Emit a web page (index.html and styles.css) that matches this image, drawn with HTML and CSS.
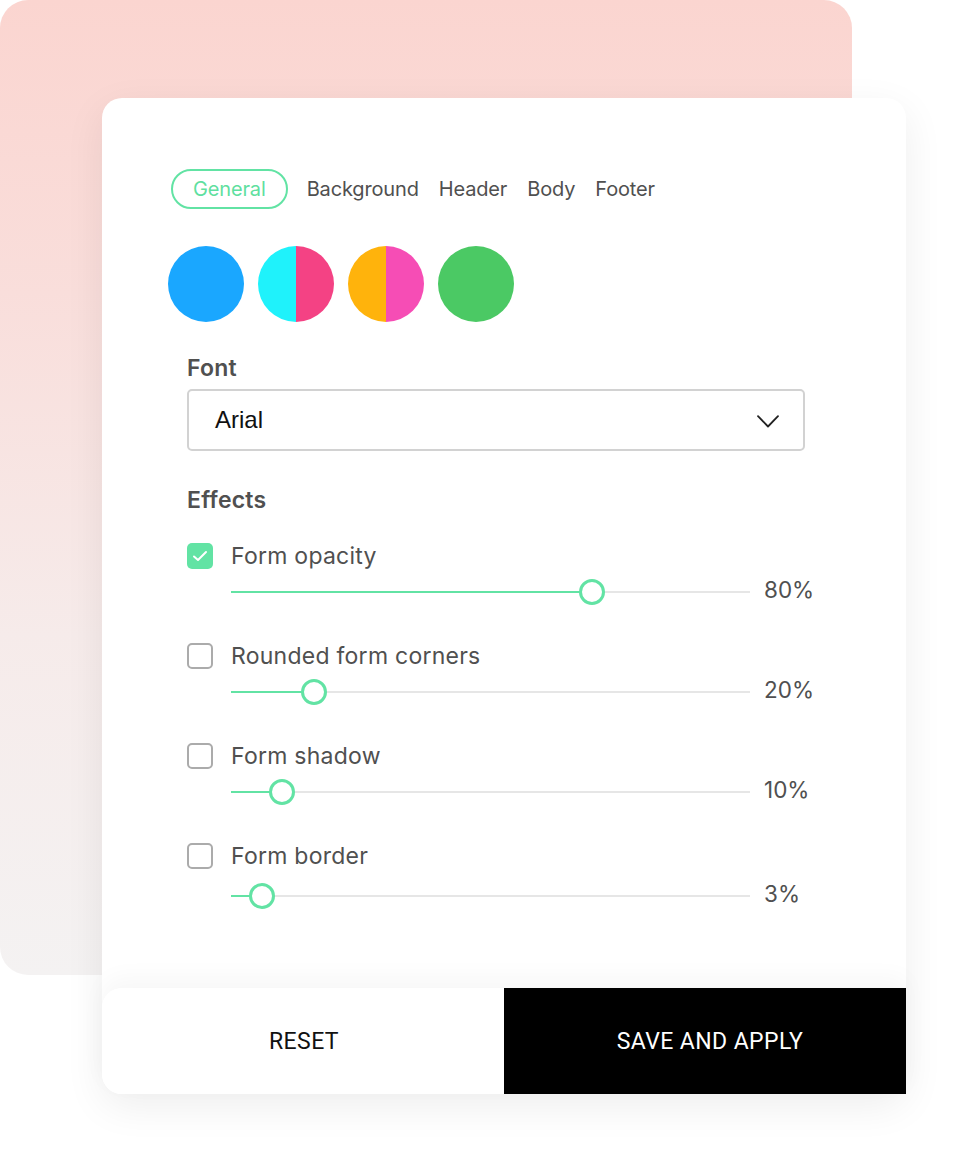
FILE: index.html
```html
<!DOCTYPE html>
<html lang="en">
<head>
<meta charset="utf-8">
<title>Form theme settings</title>
<link rel="stylesheet" href="styles.css">
</head>
<body>
<div class="stage">
  <div class="backdrop"></div>
  <div class="card">
    <div class="card-body">
      <nav class="tabs">
        <span class="tab active">General</span>
        <span class="tab">Background</span>
        <span class="tab">Header</span>
        <span class="tab">Body</span>
        <span class="tab">Footer</span>
      </nav>
      <div class="swatches">
        <span class="swatch s-blue"></span>
        <span class="swatch s-cyan-pink"></span>
        <span class="swatch s-orange-pink"></span>
        <span class="swatch s-green"></span>
      </div>
      <div class="form">
        <div class="label">Font</div>
        <div class="select">
          <span class="select-value">Arial</span>
          <svg class="chevron" width="22" height="13" viewBox="0 0 22 13"><path d="M1 1.2 L11 11.5 L21 1.2" fill="none" stroke="#222" stroke-width="1.8" stroke-linecap="round" stroke-linejoin="round"/></svg>
        </div>
        <div class="label effects-label">Effects</div>

        <div class="effect">
          <div class="effect-head">
            <span class="cb checked"><svg width="16" height="12" viewBox="0 0 16 12"><path d="M2 6.5 L6 10 L14 2" fill="none" stroke="#fff" stroke-width="2" stroke-linecap="round" stroke-linejoin="round"/></svg></span>
            <span class="effect-name">Form opacity</span>
          </div>
          <div class="effect-slider">
            <div class="track"><div class="fill" style="width:361px"></div><span class="thumb" style="left:348px"></span></div>
            <span class="value">80%</span>
          </div>
        </div>

        <div class="effect">
          <div class="effect-head">
            <span class="cb"></span>
            <span class="effect-name">Rounded form corners</span>
          </div>
          <div class="effect-slider">
            <div class="track"><div class="fill" style="width:83px"></div><span class="thumb" style="left:70px"></span></div>
            <span class="value">20%</span>
          </div>
        </div>

        <div class="effect">
          <div class="effect-head">
            <span class="cb"></span>
            <span class="effect-name">Form shadow</span>
          </div>
          <div class="effect-slider">
            <div class="track"><div class="fill" style="width:51px"></div><span class="thumb" style="left:38px"></span></div>
            <span class="value">10%</span>
          </div>
        </div>

        <div class="effect effect-last">
          <div class="effect-head">
            <span class="cb"></span>
            <span class="effect-name">Form border</span>
          </div>
          <div class="effect-slider">
            <div class="track"><div class="fill" style="width:31px"></div><span class="thumb" style="left:18px"></span></div>
            <span class="value">3%</span>
          </div>
        </div>
      </div>
    </div>
    <div class="footer">
      <button class="btn btn-reset">RESET</button>
      <button class="btn btn-save">SAVE AND APPLY</button>
    </div>
  </div>
</div>
</body>
</html>
```

FILE: styles.css
```css
* { box-sizing: border-box; }

html, body {
  margin: 0;
  padding: 0;
  background: #ffffff;
}

body {
  font-family: "Inter", "Lato", sans-serif;
  color: #555555;
}

.stage {
  position: relative;
  width: 954px;
  height: 1149px;
  overflow: hidden;
  padding-top: 98px;
  padding-left: 102px;
}

.backdrop {
  position: absolute;
  left: 0;
  top: 0;
  width: 852px;
  height: 975px;
  border-radius: 28px;
  background: linear-gradient(180deg, #fbd5d0 0%, #f9dedb 30%, #f6ebea 65%, #f4f2f2 100%);
}

.card {
  position: relative;
  width: 804px;
  height: 996px;
  background: #ffffff;
  border-radius: 20px;
  box-shadow: 0 12px 40px rgba(0, 0, 0, 0.07);
  display: flex;
  flex-direction: column;
}

.card-body {
  height: 890px;
  padding-top: 71px;
}

/* Tabs */
.tabs {
  display: flex;
  align-items: center;
  gap: 20px;
  margin-left: 69px;
  height: 40px;
}

.tab {
  font-size: 20px;
  line-height: 24px;
  color: #505050;
  letter-spacing: -0.15px;
}

.tab.active {
  height: 40px;
  display: flex;
  align-items: center;
  padding: 0 20px;
  border: 2px solid #62e3a4;
  border-radius: 20px;
  color: #5fe09f;
  margin-right: -1px;
}

/* Swatches */
.swatches {
  display: flex;
  gap: 14px;
  margin-top: 37px;
  margin-left: 66px;
}

.swatch {
  width: 76px;
  height: 76px;
  border-radius: 50%;
}

.s-blue { background: #1aa7ff; }
.s-cyan-pink { background: linear-gradient(90deg, #1ff2fb 50%, #f44284 50%); }
.s-orange-pink { background: linear-gradient(90deg, #ffb30c 50%, #f64db5 50%); }
.s-green { background: #4bc964; }

/* Form */
.form {
  margin-left: 85px;
  width: 618px;
}

.label {
  margin-top: 33px;
  font-size: 23px;
  line-height: 26px;
  font-weight: 600;
  color: #505050;
  letter-spacing: 0.2px;
}

.select {
  margin-top: 8px;
  height: 62px;
  border: 2px solid #d2d2d2;
  border-radius: 5px;
  display: flex;
  align-items: center;
  justify-content: space-between;
  padding: 0 24px 0 26px;
}

.select-value {
  font-family: "Liberation Sans", Arial, sans-serif;
  font-size: 24px;
  color: #111111;
}

.chevron { display: block; margin-top: 3px; }

.effects-label {
  margin-top: 35px;
  line-height: 28px;
}

.effect { margin-top: 38px; }
.effects-label + .effect { margin-top: 29px; }

.effect-head {
  display: flex;
  align-items: center;
  gap: 18px;
  height: 26px;
}

.cb {
  width: 26px;
  height: 26px;
  border: 2px solid #ababab;
  border-radius: 5px;
  display: flex;
  align-items: center;
  justify-content: center;
  flex: none;
}

.cb.checked {
  border: none;
  background: #62e3a4;
}

.effect-name {
  font-size: 23px;
  line-height: 26px;
  color: #505050;
  letter-spacing: 0.25px;
}

.effect-slider {
  margin-top: 10px;
  height: 26px;
  display: flex;
  align-items: center;
  padding-left: 44px;
}

.effect-last .effect-slider { margin-top: 14px; }

.track {
  position: relative;
  width: 519px;
  height: 2px;
  background: #e6e6e6;
  flex: none;
}

.fill {
  position: absolute;
  left: 0;
  top: 0;
  height: 2px;
  background: #62e3a4;
}

.thumb {
  position: absolute;
  top: -12px;
  width: 26px;
  height: 26px;
  border-radius: 50%;
  border: 3.5px solid #62e3a4;
  background: #ffffff;
}

.value {
  margin-left: 14px;
  font-size: 22.5px;
  line-height: 26px;
  color: #505050;
  margin-top: -4px;
}

/* Footer */
.footer {
  height: 106px;
  display: flex;
  border-radius: 20px 0 0 20px;
  box-shadow: 0 -10px 24px rgba(0, 0, 0, 0.035);
  overflow: hidden;
}

.btn {
  flex: none;
  width: 50%;
  height: 100%;
  border: none;
  margin: 0;
  padding: 0;
  font-family: "Roboto", "Liberation Sans", sans-serif;
  font-size: 23px;
  letter-spacing: 0.4px;
  cursor: pointer;
}

.btn-reset {
  background: #ffffff;
  color: #111111;
  padding-left: 2px;
}

.btn-save {
  background: #000000;
  color: #ffffff;
  padding-left: 10px;
}
```
